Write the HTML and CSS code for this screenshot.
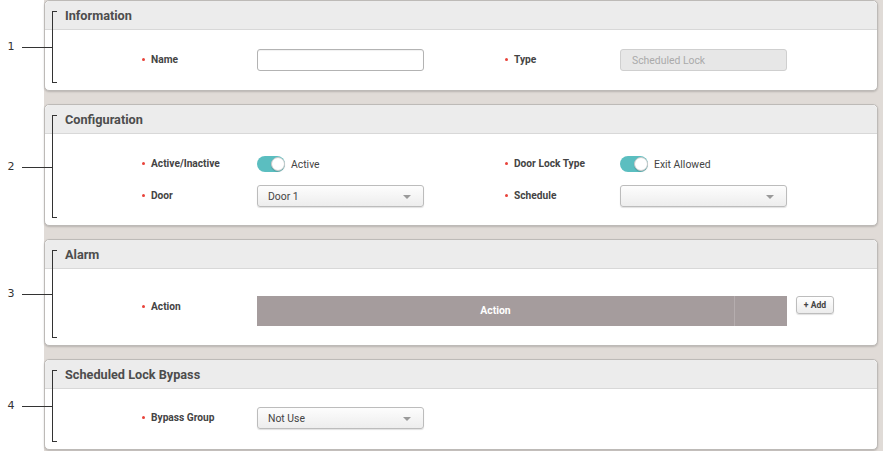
FILE: index.html
```html
<!DOCTYPE html>
<html lang="en">
<head>
    <meta charset="UTF-8">
    <meta name="viewport" content="width=device-width, initial-scale=1.0">
    <title>Scheduled Lock</title>
    <link rel="stylesheet" href="styles.css">
</head>
<body>
    <div class="page">
        <!-- 1. Information -->
        <div class="section-row">
            <div class="gutter"></div>
            <div class="section-wrap">
                <section class="panel">
                    <div class="panel-head">Information</div>
                    <div class="panel-body body-info">
                        <div class="form-row">
                            <div class="field">
                                <label class="field-label">Name</label>
                                <input class="text-input" type="text">
                            </div>
                            <div class="field">
                                <label class="field-label">Type</label>
                                <div class="text-input disabled">Scheduled Lock</div>
                            </div>
                        </div>
                    </div>
                    <span class="bracket"><span class="callout-num">1</span></span>
                </section>
            </div>
        </div>

        <!-- 2. Configuration -->
        <div class="section-row">
            <div class="gutter"></div>
            <div class="section-wrap">
                <section class="panel">
                    <div class="panel-head">Configuration</div>
                    <div class="panel-body body-config">
                        <div class="form-row">
                            <div class="field">
                                <label class="field-label">Active/Inactive</label>
                                <div class="switch-wrap">
                                    <span class="switch on"><span class="knob"></span></span>
                                    <span class="switch-text">Active</span>
                                </div>
                            </div>
                            <div class="field">
                                <label class="field-label">Door Lock Type</label>
                                <div class="switch-wrap">
                                    <span class="switch on"><span class="knob"></span></span>
                                    <span class="switch-text">Exit Allowed</span>
                                </div>
                            </div>
                        </div>
                        <div class="form-row">
                            <div class="field">
                                <label class="field-label">Door</label>
                                <div class="select">Door 1<span class="caret"></span></div>
                            </div>
                            <div class="field">
                                <label class="field-label">Schedule</label>
                                <div class="select"><span class="caret"></span></div>
                            </div>
                        </div>
                    </div>
                    <span class="bracket"><span class="callout-num">2</span></span>
                </section>
            </div>
        </div>

        <!-- 3. Alarm -->
        <div class="section-row">
            <div class="gutter"></div>
            <div class="section-wrap">
                <section class="panel">
                    <div class="panel-head">Alarm</div>
                    <div class="panel-body body-alarm">
                        <div class="form-row align-top">
                            <label class="field-label">Action</label>
                            <div class="action-table">
                                <div class="th th-main">Action</div>
                                <div class="th th-side"></div>
                            </div>
                            <button class="add-btn">+ Add</button>
                        </div>
                    </div>
                    <span class="bracket"><span class="callout-num">3</span></span>
                </section>
            </div>
        </div>

        <!-- 4. Scheduled Lock Bypass -->
        <div class="section-row">
            <div class="gutter"></div>
            <div class="section-wrap">
                <section class="panel">
                    <div class="panel-head">Scheduled Lock Bypass</div>
                    <div class="panel-body body-bypass">
                        <div class="form-row">
                            <div class="field">
                                <label class="field-label">Bypass Group</label>
                                <div class="select">Not Use<span class="caret"></span></div>
                            </div>
                        </div>
                    </div>
                    <span class="bracket"><span class="callout-num">4</span></span>
                </section>
            </div>
        </div>
    </div>
</body>
</html>
```

FILE: styles.css
```css
body {
    margin: 0;
    font-family: Roboto, "Liberation Sans", sans-serif;
    color: #444;
    background: #fff;
}
.page {
    width: 883px;
    height: 451px;
    overflow: hidden;
}
.section-row {
    display: flex;
}
.gutter {
    width: 44px;
    flex: none;
    background: #fff;
}
.section-wrap {
    flex: 1;
    background: #e0dbd7;
    padding: 0 5px 13px 0;
}
.panel {
    position: relative;
    background: #fff;
    border: 1px solid #bdbab7;
    border-radius: 5px;
    box-shadow: 0 1px 2px rgba(0,0,0,0.18);
}
.panel-head {
    height: 28px;
    line-height: 29px;
    padding-left: 20px;
    background: #ececec;
    border-bottom: 1px solid #d8d8d8;
    border-radius: 5px 5px 0 0;
    font-size: 12.7px;
    font-weight: bold;
    color: #4d4d4d;
}
.panel-body {
    padding-left: 97px;
}
.body-info {
    padding-top: 19px;
    padding-bottom: 19px;
}
.body-config {
    padding-top: 19px;
    padding-bottom: 18px;
}
.body-config .form-row + .form-row {
    margin-top: 10px;
}
.body-alarm {
    padding-top: 27px;
    padding-bottom: 19px;
}
.body-bypass {
    padding-top: 18px;
    padding-bottom: 20px;
}
.form-row {
    display: flex;
    align-items: center;
    height: 22px;
}
.form-row.align-top {
    align-items: flex-start;
    height: 30px;
}
.field {
    display: flex;
    align-items: center;
    width: 363px;
}
.field-label {
    width: 115px;
    flex: none;
    font-size: 10.2px;
    font-weight: bold;
    color: #444;
    line-height: 22px;
}
.field-label::before {
    content: "";
    display: inline-block;
    width: 3px;
    height: 3px;
    border-radius: 50%;
    background: #e8423a;
    margin: 0 6px 2px 0;
    vertical-align: middle;
}
.text-input {
    box-sizing: border-box;
    width: 167px;
    height: 22px;
    margin: 0;
    border: 1px solid #b3b3b3;
    border-radius: 3px;
    background: #fff;
    box-shadow: inset 0 1px 1px rgba(0,0,0,0.06);
    font-family: inherit;
    font-size: 10.4px;
    padding: 0 11px;
    outline: none;
}
.text-input.disabled {
    background: #e7e7e7;
    border-color: #cfcfcf;
    color: #aaa;
    line-height: 21px;
    box-shadow: none;
}
.switch-wrap {
    display: flex;
    align-items: center;
}
.switch {
    position: relative;
    width: 28px;
    height: 16px;
    border-radius: 8px;
    background: #5bbec0;
}
.switch .knob {
    position: absolute;
    top: 1px;
    right: 0;
    width: 14px;
    height: 14px;
    border-radius: 50%;
    background: #fff;
    border: 1px solid #c9c9c9;
    box-sizing: border-box;
    box-shadow: 0 1px 1px rgba(0,0,0,0.15);
}
.switch-text {
    margin-left: 6px;
    font-size: 10.4px;
    color: #444;
}
.select {
    position: relative;
    box-sizing: border-box;
    width: 167px;
    height: 22px;
    line-height: 21px;
    padding-left: 10px;
    border: 1px solid #bcbcbc;
    border-radius: 3px;
    background: linear-gradient(#fdfdfd, #ededed);
    box-shadow: 0 1px 1px rgba(0,0,0,0.12);
    font-size: 10.4px;
    color: #444;
}
.caret {
    position: absolute;
    right: 12px;
    top: 9px;
    border-left: 4px solid transparent;
    border-right: 4px solid transparent;
    border-top: 4px solid #9a9a9a;
}
.action-table {
    display: flex;
    width: 530px;
    height: 30px;
    background: #a59c9d;
}
.th {
    height: 30px;
    line-height: 30px;
    color: #fff;
    font-size: 10.4px;
    font-weight: bold;
    text-align: center;
}
.th-main {
    width: 477px;
    border-right: 1px solid #b5adae;
}
.th-side {
    flex: 1;
}
.add-btn {
    margin-left: 9px;
    width: 38px;
    height: 18px;
    padding: 0;
    border: 1px solid #bdbdbd;
    border-radius: 3px;
    background: linear-gradient(#fff, #ececec);
    box-shadow: 0 1px 1px rgba(0,0,0,0.12);
    font-family: inherit;
    font-size: 8.6px;
    font-weight: bold;
    color: #444;
}
.bracket {
    position: absolute;
    left: 7px;
    top: 10px;
    bottom: 7px;
    width: 4px;
    border: 1px solid #333;
    border-right: none;
}
.bracket::before {
    content: "";
    position: absolute;
    left: -31px;
    top: 50%;
    width: 30px;
    height: 1px;
    background: #333;
}
.callout-num {
    position: absolute;
    left: -48px;
    top: 50%;
    width: 12px;
    margin-top: -7px;
    text-align: center;
    font-family: "DejaVu Sans", sans-serif;
    font-size: 11px;
    line-height: 14px;
    color: #333;
}
```
